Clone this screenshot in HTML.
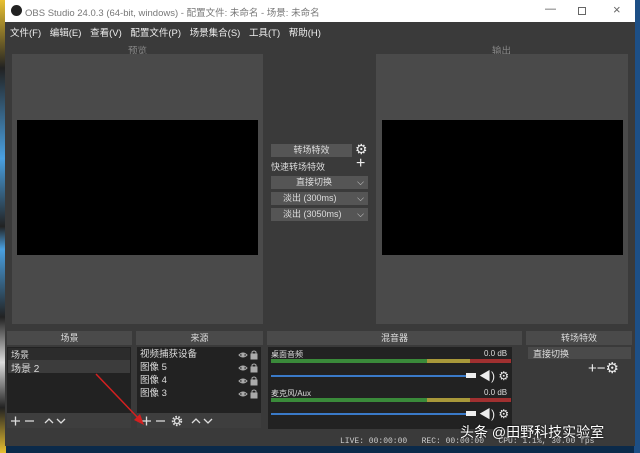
<!DOCTYPE html><html><head><meta charset="utf-8"><style>
*{margin:0;padding:0;box-sizing:border-box}
body{width:640px;height:453px;overflow:hidden;background:#0b2a4a;font-family:"Liberation Sans","Noto Sans CJK SC",sans-serif;font-size:9px;color:#ddd;position:relative}
.a{position:absolute}
.t{white-space:nowrap}
</style></head><body>
<div class="a" style="left:0;top:0;width:6px;height:453px;background:linear-gradient(#e8c030,#222 15%,#4aa0e0 35%,#222 50%,#4aa0e0 55%,#222 70%,#ddd 80%,#222 90%,#e8c030)"></div>
<div class="a" style="left:634px;top:0;width:6px;height:453px;background:#1d4f86"></div>
<div class="a" style="left:5px;top:0;width:630px;height:446px;background:#3a3a3a"></div>
<div class="a" style="left:5px;top:0;width:630px;height:22px;background:#fff"></div>
<div class="a t" style="left:11px;top:5px;width:11px;height:11px;border-radius:50%;background:#222"></div>
<div class="a t" style="left:25px;top:5px;color:#777;font-size:9.5px">OBS Studio 24.0.3 (64-bit, windows) - 配置文件: 未命名 - 场景: 未命名</div>
<div class="a t" style="left:545px;top:3px;color:#555;font-size:11px">—</div>
<div class="a" style="left:578px;top:7px;width:8px;height:8px;border:1px solid #666"></div>
<div class="a t" style="left:613px;top:2px;color:#666;font-size:13px">×</div>
<div class="a t" style="left:10px;top:25px;font-size:9.5px;color:#eee;word-spacing:6px">文件(F) 编辑(E) 查看(V) 配置文件(P) 场景集合(S) 工具(T) 帮助(H)</div>
<div class="a t" style="left:128px;top:43px;color:#888;font-size:9.5px">预览</div>
<div class="a t" style="left:492px;top:43px;color:#888;font-size:9.5px">输出</div>
<div class="a" style="left:12px;top:54px;width:251px;height:270px;background:#4a4a4a"></div>
<div class="a" style="left:17px;top:120px;width:241px;height:135px;background:#000"></div>
<div class="a" style="left:376px;top:54px;width:252px;height:270px;background:#4a4a4a"></div>
<div class="a" style="left:382px;top:120px;width:241px;height:135px;background:#000"></div>
<div class="a t" style="left:271px;top:144px;width:81px;height:13px;background:#555;text-align:center;line-height:13px">转场特效</div>
<div class="a t" style="left:355px;top:141px;font-size:14px;color:#eee">⚙</div>
<div class="a t" style="left:271px;top:160px">快速转场特效</div>
<div class="a t" style="left:356px;top:155px;font-size:16px;color:#eee">+</div>
<div class="a t" style="left:271px;top:176px;width:97px;height:13px;background:#555;line-height:13px;padding-left:25px">直接切换<span style="position:absolute;right:4px">⌵</span></div>
<div class="a t" style="left:271px;top:192px;width:97px;height:13px;background:#555;line-height:13px;padding-left:12px">淡出 (300ms)<span style="position:absolute;right:4px">⌵</span></div>
<div class="a t" style="left:271px;top:208px;width:97px;height:13px;background:#555;line-height:13px;padding-left:12px">淡出 (3050ms)<span style="position:absolute;right:4px">⌵</span></div>
<div class="a" style="left:7px;top:331px;width:125px;height:14px;background:#4a4a4a;text-align:center;line-height:14px">场景</div>
<div class="a" style="left:136px;top:331px;width:127px;height:14px;background:#4a4a4a;text-align:center;line-height:14px">来源</div>
<div class="a" style="left:267px;top:331px;width:255px;height:14px;background:#4a4a4a;text-align:center;line-height:14px">混音器</div>
<div class="a" style="left:526px;top:331px;width:106px;height:14px;background:#4a4a4a;text-align:center;line-height:14px">转场特效</div>
<div class="a" style="left:7px;top:347px;width:124px;height:66px;background:#222"></div>
<div class="a" style="left:8px;top:348px;width:122px;height:12px;background:#2c2c2c;padding-left:3px">场景</div>
<div class="a" style="left:8px;top:360px;width:122px;height:13px;background:#3c3c3c;padding-left:3px;font-size:10px">场景 2</div>
<div class="a" style="left:7px;top:413px;width:124px;height:15px;background:#3e3e3e"></div>
<svg class="a" style="left:10px;top:415px" width="70" height="12" stroke="#ddd" stroke-width="1.3" fill="none"><path d="M1 6h9M5.5 1.5v9M15 6h9M35 8l4-4 4 4M47 4l4 4 4-4"/></svg>
<div class="a" style="left:137px;top:347px;width:124px;height:66px;background:#222;line-height:13px;padding:1px 3px;font-size:9.5px">视频捕获设备<br>图像 5<br>图像 4<br>图像 3</div>
<svg class="a" style="left:238px;top:349px" width="22" height="52" stroke="#aaa" fill="none" stroke-width="1">
<g id="r"><path d="M1 6q4-4 8 0q-4 4-8 0z"/><circle cx="5" cy="6" r="1.2" fill="#aaa"/><rect x="13" y="5" width="6" height="5" fill="#aaa"/><path d="M14 5v-2q2-2 4 0v2"/></g>
<use href="#r" y="13"/><use href="#r" y="26"/><use href="#r" y="39"/></svg>
<div class="a" style="left:137px;top:413px;width:124px;height:15px;background:#3e3e3e"></div>
<svg class="a" style="left:141px;top:415px" width="80" height="12" stroke="#ddd" stroke-width="1.3" fill="none"><path d="M1 6h9M5.5 1.5v9M15 6h9M51 8l4-4 4 4M63 4l4 4 4-4"/><circle cx="36" cy="6" r="2.5"/><circle cx="36" cy="6" r="4.2" stroke-dasharray="1.6 1.4" stroke-width="2"/></svg>
<div class="a" style="left:268px;top:347px;width:244px;height:82px;background:#222"></div>
<div class="a t" style="left:271px;top:349px;font-size:8px">桌面音频</div><div class="a t" style="left:484px;top:349px;font-size:8px">0.0 dB</div>
<div class="a" style="left:271px;top:359px;width:240px;height:4px;background:linear-gradient(90deg,#3a8a3a 65%,#a8983a 65%,#a8983a 83%,#a03030 83%)"></div>
<div class="a" style="left:271px;top:375px;width:195px;height:2px;background:#3a7ac8"></div>
<div class="a" style="left:466px;top:373px;width:10px;height:5px;background:#eee"></div>
<div class="a t" style="left:479px;top:367px;font-size:12px;color:#eee">◀) ⚙</div>
<div class="a t" style="left:271px;top:388px;font-size:8px">麦克风/Aux</div><div class="a t" style="left:484px;top:388px;font-size:8px">0.0 dB</div>
<div class="a" style="left:271px;top:398px;width:240px;height:4px;background:linear-gradient(90deg,#3a8a3a 65%,#a8983a 65%,#a8983a 83%,#a03030 83%)"></div>
<div class="a" style="left:271px;top:413px;width:195px;height:2px;background:#3a7ac8"></div>
<div class="a" style="left:466px;top:411px;width:10px;height:5px;background:#eee"></div>
<div class="a t" style="left:479px;top:405px;font-size:12px;color:#eee">◀) ⚙</div>
<div class="a" style="left:528px;top:347px;width:103px;height:12px;background:#4a4a4a;padding-left:5px">直接切换</div>
<div class="a t" style="left:588px;top:359px;font-size:15px;color:#eee">+−⚙</div>
<div class="a t" style="left:340px;top:437px;font-size:8px;color:#ccc;font-family:'Liberation Mono',monospace">LIVE: 00:00:00 &nbsp; REC: 00:00:00 &nbsp; CPU: 1.1%, 30.00 fps</div>
<div class="a t" style="left:460px;top:422px;font-size:14px;color:#fff;text-shadow:0 0 2px #000">头条 @田野科技实验室</div>
<svg class="a" style="left:90px;top:370px" width="60" height="60"><line x1="6" y1="4" x2="50" y2="50" stroke="#d42020" stroke-width="1.5"/><polygon points="54,55 44,50 50,44" fill="#d42020"/></svg>
</body></html>
